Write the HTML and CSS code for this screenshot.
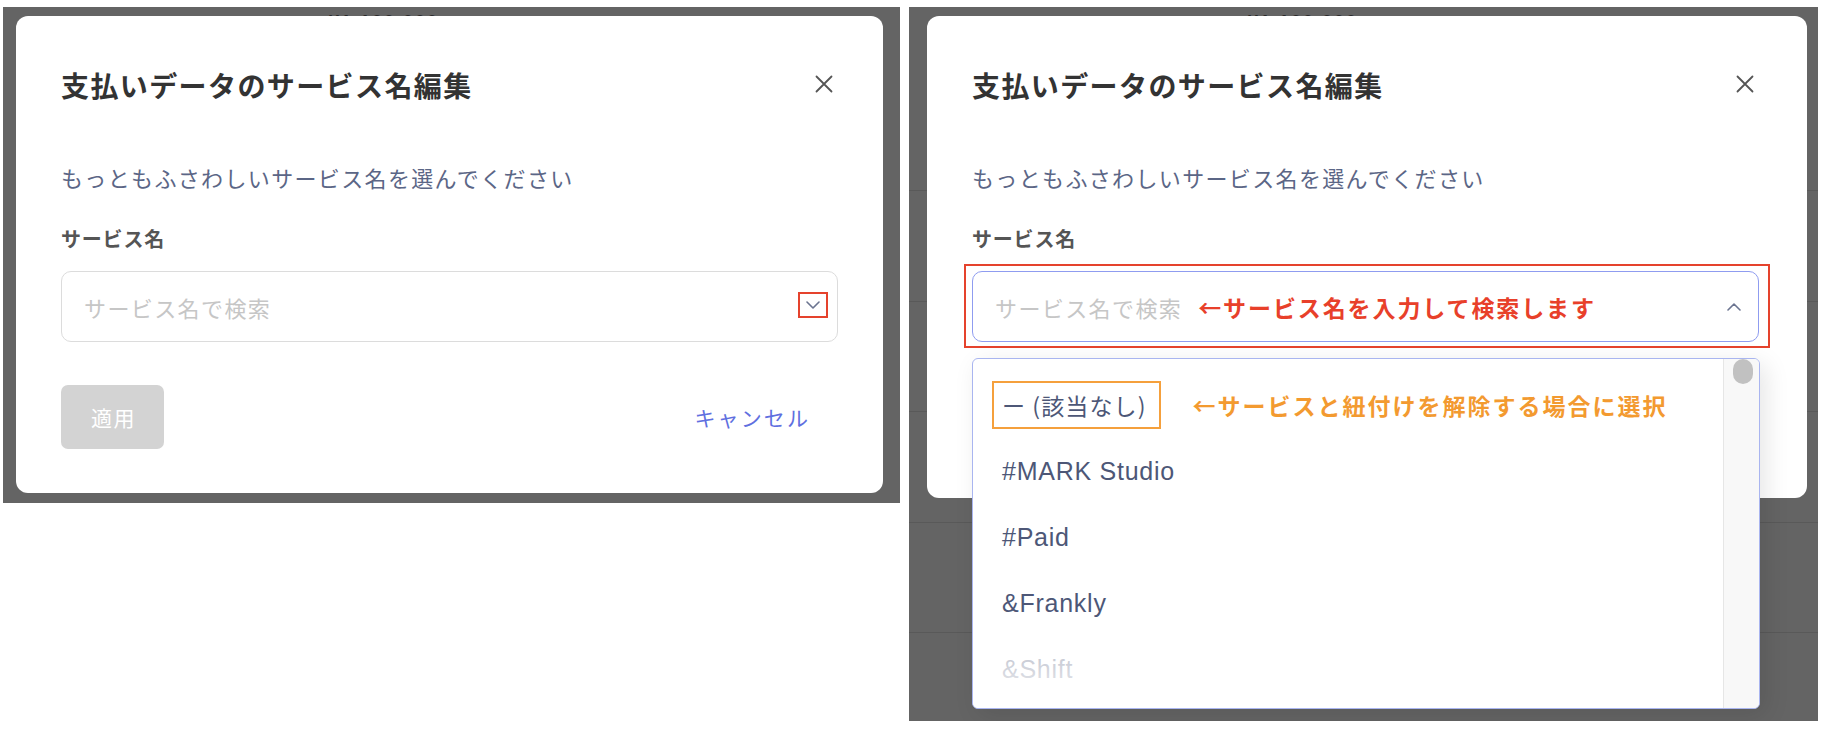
FILE: index.html
```html
<!DOCTYPE html>
<html lang="ja">
<head>
<meta charset="utf-8">
<title>支払いデータのサービス名編集</title>
<link rel="stylesheet" href="styles.css">
</head>
<body>
<div class="canvas">
  <section class="panel panel-left">
    <div class="page">
      <div class="page-head"><span class="page-amount">¥1,100,000</span></div>
    </div>
    <div class="modal modal-left">
      <div class="modal-header">
        <h2 class="modal-title">支払いデータのサービス名編集</h2>
        <button class="close-btn" aria-label="閉じる">
          <svg width="18" height="18" viewBox="0 0 18 18"><path d="M1.5 1.5L16.5 16.5M16.5 1.5L1.5 16.5" stroke="#555" stroke-width="1.8" stroke-linecap="round"/></svg>
        </button>
      </div>
      <p class="modal-lead">もっともふさわしいサービス名を選んでください</p>
      <div class="field-label">サービス名</div>
      <div class="select-wrap">
        <div class="select">
          <span class="placeholder">サービス名で検索</span>
          <span class="chevron chevron-marked">
            <svg width="14" height="8" viewBox="0 0 14 8"><path d="M1 1l6 6 6-6" fill="none" stroke="#6b7490" stroke-width="1.6" stroke-linecap="round" stroke-linejoin="round"/></svg>
          </span>
        </div>
      </div>
      <div class="modal-footer">
        <button class="btn-apply">適用</button>
        <button class="btn-cancel">キャンセル</button>
      </div>
    </div>
  </section>

  <section class="panel panel-right">
    <div class="page">
      <div class="page-head"><span class="page-amount">¥1,100,000</span></div>
      <div class="page-rows">
        <div class="page-row"></div>
        <div class="page-row"></div>
        <div class="page-row"></div>
        <div class="page-row"></div>
        <div class="page-row"></div>
      </div>
    </div>
    <div class="modal modal-right">
      <div class="modal-header">
        <h2 class="modal-title">支払いデータのサービス名編集</h2>
        <button class="close-btn" aria-label="閉じる">
          <svg width="18" height="18" viewBox="0 0 18 18"><path d="M1.5 1.5L16.5 16.5M16.5 1.5L1.5 16.5" stroke="#555" stroke-width="1.8" stroke-linecap="round"/></svg>
        </button>
      </div>
      <p class="modal-lead">もっともふさわしいサービス名を選んでください</p>
      <div class="field-label">サービス名</div>
      <div class="select-wrap">
        <div class="select select-open">
          <span class="placeholder">サービス名で検索</span>
          <span class="note note-red">←サービス名を入力して検索します</span>
          <span class="chevron">
            <svg width="14" height="8" viewBox="0 0 14 8"><path d="M1 7l6-6 6 6" fill="none" stroke="#6b7490" stroke-width="1.6" stroke-linecap="round" stroke-linejoin="round"/></svg>
          </span>
        </div>
        <div class="mark-red"></div>
        <div class="dropdown">
          <ul class="options">
            <li class="option"><span class="option-none">ー (該当なし)</span><span class="note note-orange">←サービスと紐付けを解除する場合に選択</span></li>
            <li class="option">#MARK Studio</li>
            <li class="option">#Paid</li>
            <li class="option">&amp;Frankly</li>
            <li class="option">&amp;Shift</li>
          </ul>
          <div class="options-fade"></div>
          <div class="scrolltrack"><div class="scrollthumb"></div></div>
        </div>
      </div>
    </div>
  </section>
</div>
</body>
</html>
```

FILE: styles.css
```css
* { box-sizing: border-box; }
html, body { margin: 0; padding: 0; background: #fff; }
body {
  font-family: "Noto Sans CJK JP", "Noto Sans", sans-serif;
  width: 1830px;
  height: 736px;
  overflow: hidden;
}

.canvas {
  display: flex;
  align-items: flex-start;
  gap: 9px;
  padding: 7px 0 0 3px;
}

.panel {
  position: relative;
  background: #646464;
  overflow: hidden;
}
.panel-left { width: 897px; height: 496px; }
.panel-right { width: 909px; height: 714px; }

.page-head {
  height: 20px;
  padding-top: 5px;
  font: 700 18px/20px "Liberation Sans", sans-serif;
  color: #2a2a2a;
  letter-spacing: 2px;
}
.panel-left .page-head { padding-left: 326px; }
.panel-right .page-head { padding-left: 339px; }

.page-rows { padding-top: 53.5px; }
.page-row {
  height: 110.5px;
  border-bottom: 1px solid #595959;
}

.modal {
  position: absolute;
  background: #fff;
  border-radius: 12px;
  padding: 53px 45px 44px;
  display: flex;
  flex-direction: column;
}
.modal-left { left: 13px; top: 9px; width: 867px; height: 477px; }
.modal-right { left: 18px; top: 9px; width: 880px; height: 482px; padding-right: 48px; }

.modal-header {
  display: flex;
  justify-content: space-between;
  align-items: center;
  height: 32px;
}
.modal-title {
  margin: 0;
  font-size: 28px;
  line-height: 32px;
  font-weight: 700;
  letter-spacing: 1.4px;
  color: #333;
}
.close-btn {
  width: 18px;
  height: 18px;
  padding: 0;
  margin: -3px 5px 0 0;
  border: 0;
  background: none;
  display: flex;
}

.modal-lead {
  margin: 61px 0 0;
  font-size: 22px;
  line-height: 30px;
  letter-spacing: 1.35px;
  color: #5b6686;
}

.field-label {
  margin-top: 34px;
  font-size: 20px;
  line-height: 26px;
  font-weight: 700;
  letter-spacing: 0.8px;
  color: #555;
}

.select-wrap {
  position: relative;
  margin-top: 19px;
}
.select {
  height: 71px;
  border: 1px solid #dcdcdc;
  border-radius: 10px;
  display: flex;
  align-items: center;
  padding: 0 9px 0 22px;
}
.select-open { border-color: #8f9cf0; }

.placeholder {
  font-size: 22px;
  letter-spacing: 1.4px;
  color: #c6c6c6;
}

.chevron {
  margin-left: auto;
  width: 30px;
  height: 26px;
  display: flex;
  align-items: center;
  justify-content: center;
}
.chevron-marked { border: 2px solid #e5432d; margin-top: -4px; }

.note {
  font-size: 23px;
  font-weight: 700;
  letter-spacing: 1.9px;
}
.note-red { color: #e8402a; margin-left: 16px; }
.note-orange { color: #f39a30; margin-left: 32px; letter-spacing: 2px; }

.mark-red {
  position: absolute;
  top: -7px;
  left: -8px;
  right: -11px;
  bottom: -6px;
  border: 2px solid #e5432d;
  pointer-events: none;
}

.dropdown {
  position: absolute;
  left: 0;
  top: calc(100% + 16px);
  width: 788px;
  height: 351px;
  border: 1px solid #a9b5f0;
  border-radius: 6px;
  background: #fff;
  display: flex;
  overflow: hidden;
  box-shadow: 6px 6px 24px rgba(0, 0, 0, 0.10);
  z-index: 2;
}
.options {
  list-style: none;
  margin: 0;
  padding: 13px 0 0;
  flex: 1;
}
.option {
  height: 66px;
  display: flex;
  align-items: center;
  padding-left: 29px;
  font-family: "Liberation Sans", "Noto Sans CJK JP", sans-serif;
  font-size: 25px;
  letter-spacing: 0.75px;
  color: #4d5777;
}
.option-none {
  display: inline-flex;
  align-items: center;
  height: 48px;
  margin-left: -10px;
  padding: 0 12px 0 8px;
  border: 2px solid #f5a03c;
  font-family: "Noto Sans CJK JP", sans-serif;
  font-size: 23px;
  letter-spacing: 1.1px;
  color: #4d5777;
}
.option .note { font-family: "Noto Sans CJK JP", sans-serif; }

.options-fade {
  position: absolute;
  left: 0;
  right: 37px;
  bottom: 0;
  height: 82px;
  background: linear-gradient(to bottom, rgba(255,255,255,0) 0%, rgba(255,255,255,0.68) 35%, rgba(255,255,255,0.95) 100%);
  pointer-events: none;
}

.scrolltrack {
  width: 36px;
  flex: none;
  border-left: 1px solid #e6e6e6;
  background: #f8f8f8;
  padding-left: 9px;
}
.scrollthumb {
  width: 20px;
  height: 25px;
  border-radius: 10px;
  background: #c1c1c1;
}

.modal-footer {
  margin-top: 43px;
  display: flex;
  justify-content: space-between;
  align-items: center;
}
.btn-apply {
  width: 103px;
  height: 64px;
  border: 0;
  border-radius: 7px;
  background: #d3d3d3;
  color: #fff;
  font-family: "Noto Sans CJK JP", sans-serif;
  font-size: 21px;
  letter-spacing: 1.5px;
  padding: 0 0 0 2px;
}
.btn-cancel {
  border: 0;
  background: none;
  padding: 0;
  margin-right: 28px;
  color: #5f6fe0;
  font-family: "Noto Sans CJK JP", sans-serif;
  font-size: 21px;
  letter-spacing: 2.1px;
}
```
